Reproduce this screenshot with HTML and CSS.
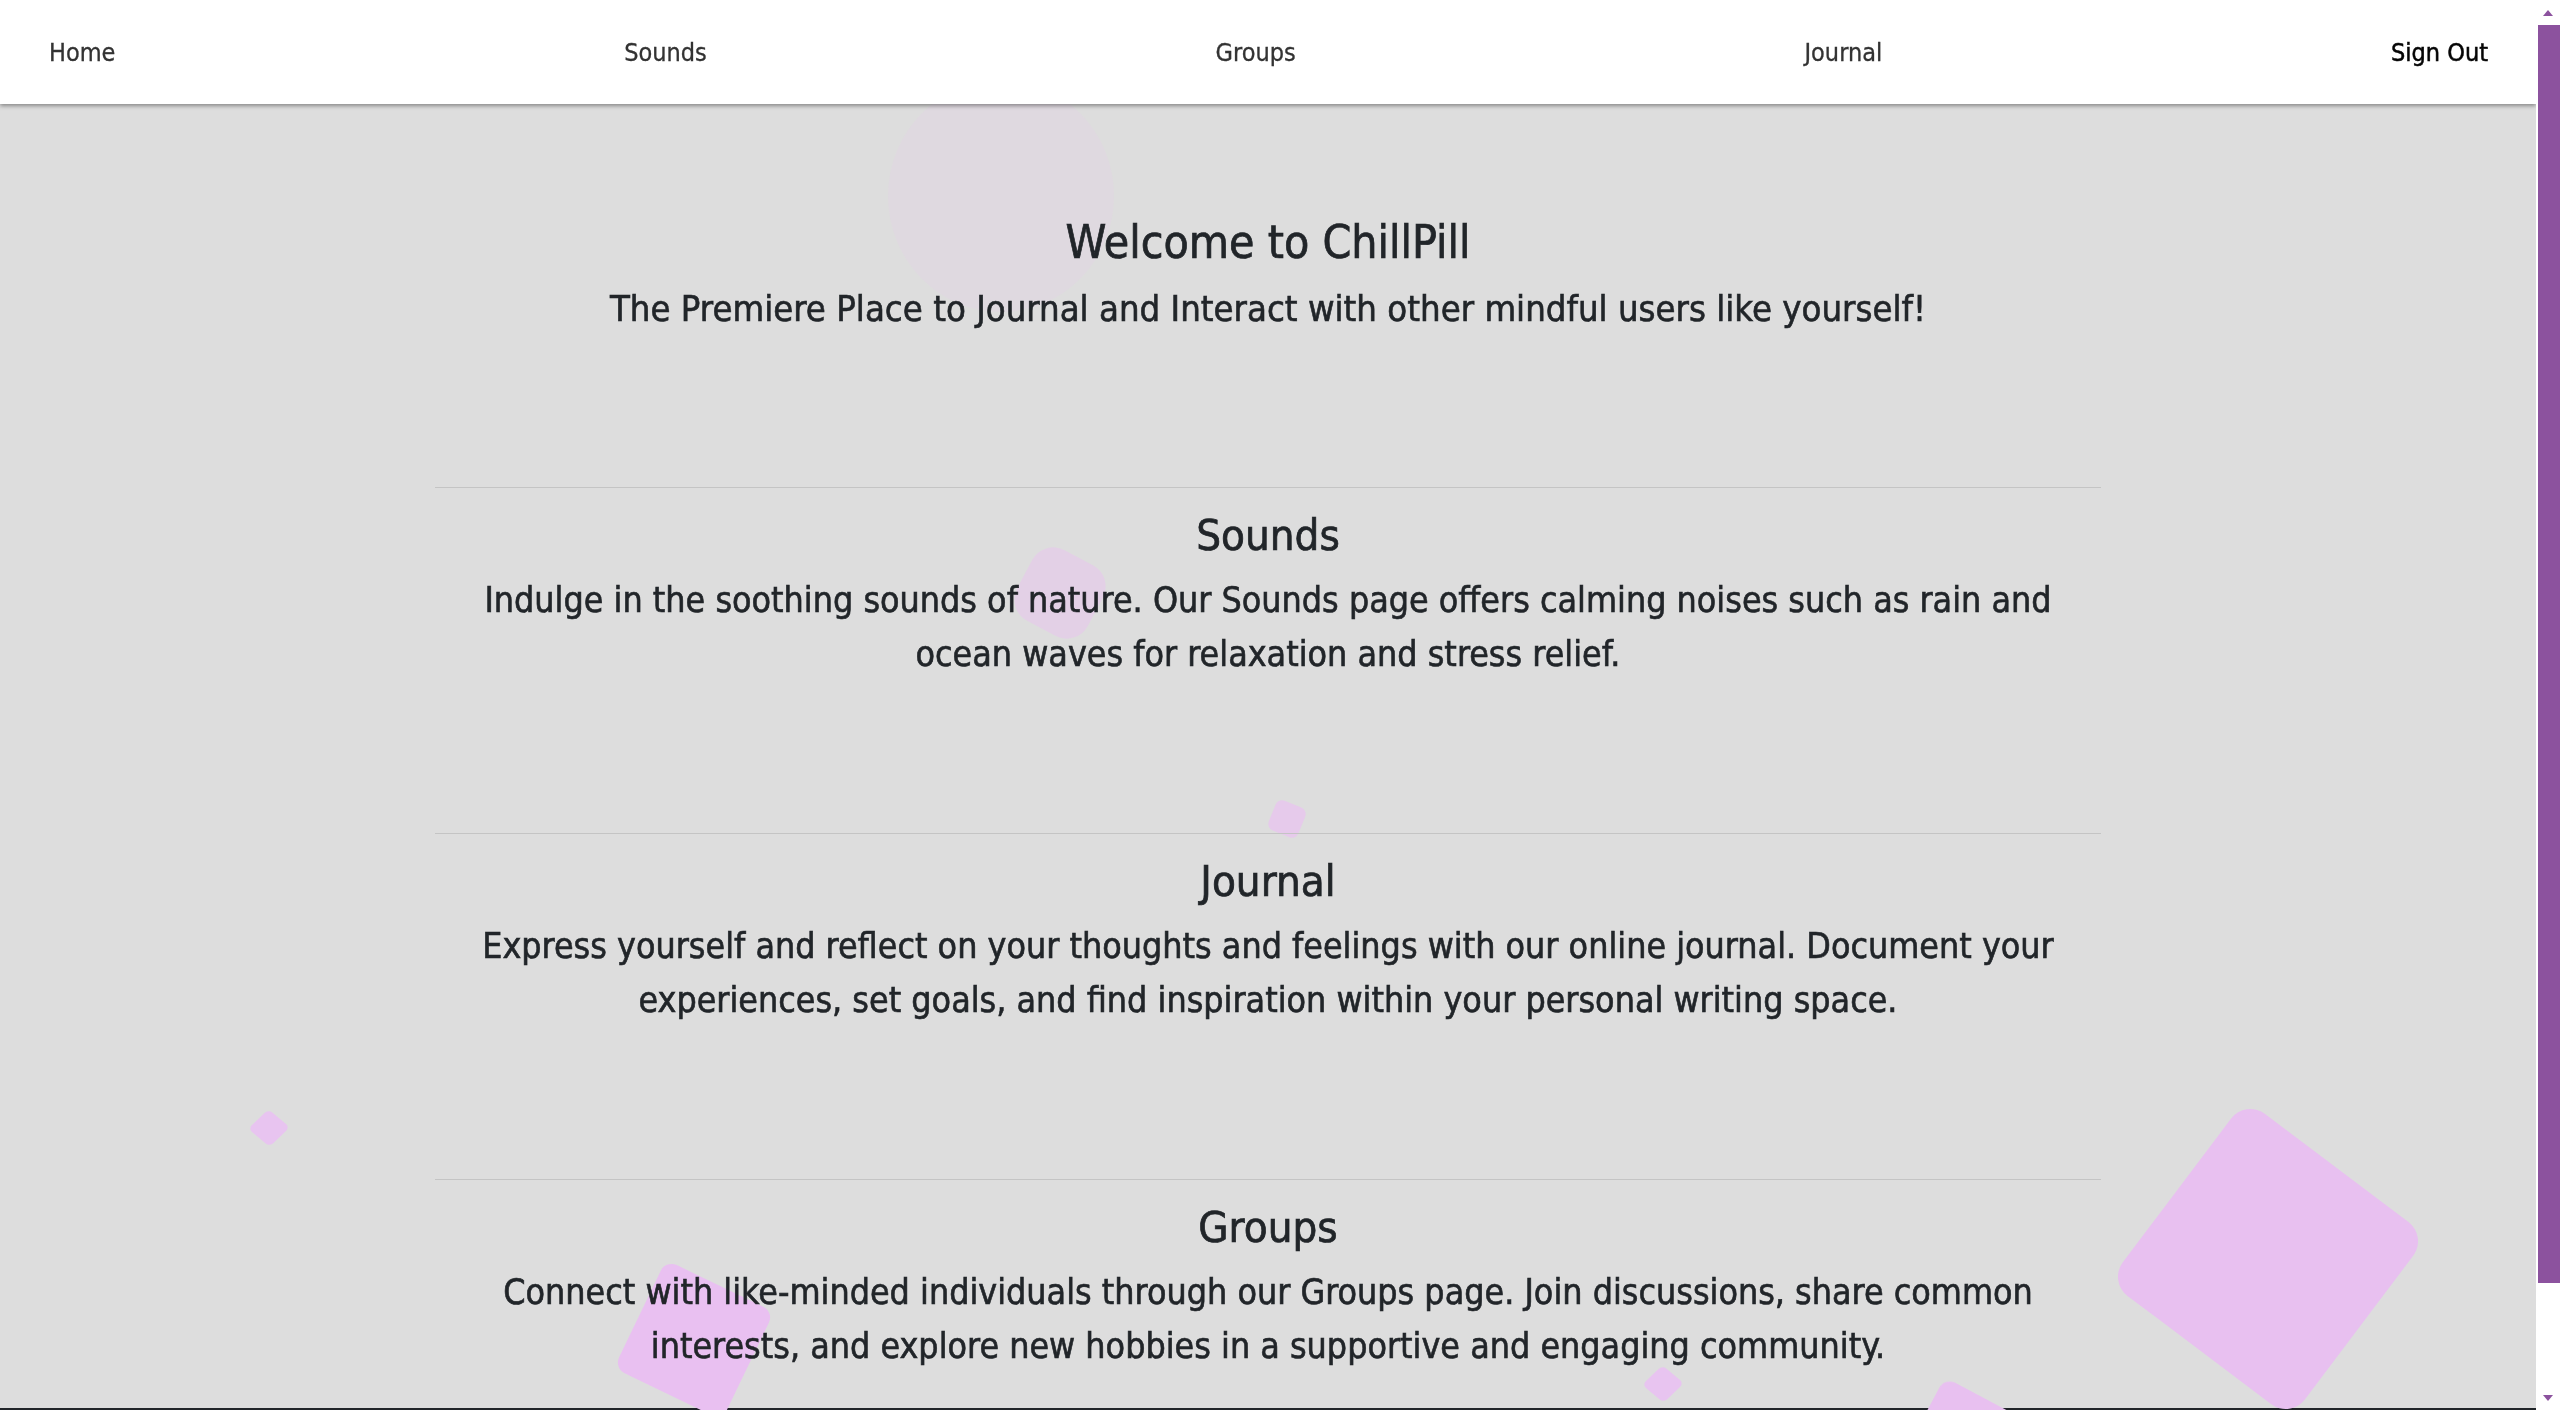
FILE: index.html
```html
<!DOCTYPE html>
<html lang="en">
<head>
<meta charset="utf-8">
<title>ChillPill</title>
<link rel="stylesheet" href="styles.css">
</head>
<body>
<nav class="topnav">
  <a class="nav-link" href="#">Home</a>
  <a class="nav-link" href="#">Sounds</a>
  <a class="nav-link" href="#">Groups</a>
  <a class="nav-link" href="#">Journal</a>
  <a class="nav-link nav-signout" href="#">Sign Out</a>
</nav>

<div class="shapes" aria-hidden="true">
  <span class="shape shape-faint"></span>
  <span class="shape shape-blob"></span>
  <span class="shape shape-tiny-a"></span>
  <span class="shape shape-tiny-left"></span>
  <span class="shape shape-big-left"></span>
  <span class="shape shape-big-right"></span>
  <span class="shape shape-tiny-b"></span>
  <span class="shape shape-bottom"></span>
</div>

<main class="content">
  <header class="hero">
    <h1 class="hero-title">Welcome to ChillPill</h1>
    <p class="hero-sub">The Premiere Place to Journal and Interact with other mindful users like yourself!</p>
  </header>
  <hr class="divider">
  <section class="feature">
    <h2 class="feature-title">Sounds</h2>
    <p class="feature-text">Indulge in the soothing sounds of nature. Our Sounds page offers calming noises such as rain and ocean waves for relaxation and stress relief.</p>
  </section>
  <hr class="divider">
  <section class="feature">
    <h2 class="feature-title">Journal</h2>
    <p class="feature-text">Express yourself and reflect on your thoughts and feelings with our online journal. Document your experiences, set goals, and find inspiration within your personal writing space.</p>
  </section>
  <hr class="divider">
  <section class="feature feature-last">
    <h2 class="feature-title">Groups</h2>
    <p class="feature-text">Connect with like-minded individuals through our Groups page. Join discussions, share common interests, and explore new hobbies in a supportive and engaging community.</p>
  </section>
</main>

<footer class="footer"></footer>

<div class="scrollbar" aria-hidden="true">
  <span class="sb-button"><span class="sb-arrow-up"></span></span>
  <span class="sb-track"><span class="sb-thumb"></span></span>
  <span class="sb-button"><span class="sb-arrow-down"></span></span>
</div>
</body>
</html>
```

FILE: styles.css
```css
* {
  box-sizing: border-box;
}

body {
  margin: 0 24px 0 0;
  background: #dddddd;
  color: #212529;
  font-family: "DejaVu Sans Condensed", "DejaVu Sans", sans-serif;
}

/* ---------- navigation ---------- */
.topnav {
  position: relative;
  z-index: 3;
  height: 104px;
  padding: 0 48px 0 49px;
  display: flex;
  align-items: center;
  justify-content: space-between;
  background: #ffffff;
  box-shadow: 0 2px 4px rgba(0, 0, 0, 0.38);
}

.nav-link {
  font-size: 25px;
  color: #333333;
  text-decoration: none;
  -webkit-text-stroke: 0.3px currentColor;
}

.nav-signout {
  color: #050505;
  -webkit-text-stroke: 0.5px currentColor;
}

/* ---------- decorative floating shapes ---------- */
.shapes {
  position: fixed;
  inset: 0;
  z-index: 1;
  pointer-events: none;
}

.shape {
  position: absolute;
  display: block;
}

.shape-faint {
  left: 888px;
  top: 80px;
  width: 226px;
  height: 232px;
  border-radius: 50%;
  background: #dfd9e0;
}

.shape-blob {
  left: 1020px;
  top: 553px;
  width: 80px;
  height: 80px;
  border-radius: 24px;
  background: #e3d0e6;
  transform: rotate(28deg);
}

.shape-tiny-a {
  left: 1271px;
  top: 803px;
  width: 32px;
  height: 32px;
  border-radius: 7px;
  background: #e6caeb;
  transform: rotate(22deg);
}

.shape-tiny-left {
  left: 255px;
  top: 1114px;
  width: 28px;
  height: 28px;
  border-radius: 5px;
  background: #e8c4f0;
  transform: rotate(40deg) skew(-6deg);
}

.shape-tiny-b {
  left: 1649px;
  top: 1370px;
  width: 28px;
  height: 28px;
  border-radius: 5px;
  background: #e8c4f0;
  transform: rotate(40deg) skew(-6deg);
}

.shape-big-left {
  left: 634px;
  top: 1280px;
  width: 120px;
  height: 120px;
  border-radius: 12px;
  background: #e9c0f1;
  transform: rotate(25.7deg);
}

.shape-big-right {
  left: 2154px;
  top: 1145px;
  width: 228px;
  height: 228px;
  border-radius: 24px;
  background: #e8c0f0;
  transform: rotate(37deg);
}

.shape-bottom {
  left: 1912px;
  top: 1397px;
  width: 112px;
  height: 112px;
  border-radius: 12px;
  background: #e8c0f0;
  transform: rotate(28deg);
}

/* ---------- main content ---------- */
.content {
  position: relative;
  z-index: 2;
  width: 1666px;
  margin: 0 auto;
  text-align: center;
}

.hero {
  padding: 107px 0 39px;
}

.hero-title {
  margin: 0;
  font-size: 46px;
  line-height: 62px;
  font-weight: normal;
  -webkit-text-stroke: 0.7px currentColor;
}

.hero-sub {
  margin: 9px 0 0;
  font-size: 36.2px;
  line-height: 54px;
  -webkit-text-stroke: 0.6px currentColor;
}

.divider {
  margin: 112px 0 0;
  border: 0;
  border-top: 1px solid #c4c4c4;
}

.feature {
  padding: 21px 0 40px;
}

.feature-last {
  padding-bottom: 35px;
}

.feature-title {
  margin: 0;
  font-size: 43.5px;
  line-height: 52px;
  font-weight: normal;
  -webkit-text-stroke: 0.7px currentColor;
}

.feature-text {
  max-width: 1620px;
  margin: 12px auto 0;
  font-size: 35.5px;
  line-height: 54px;
  -webkit-text-stroke: 0.6px currentColor;
}

.footer {
  height: 117px;
  background: #212529;
}

/* ---------- window scrollbar ---------- */
.scrollbar {
  position: fixed;
  top: 0;
  right: 0;
  z-index: 5;
  width: 24px;
  height: 100vh;
  display: flex;
  flex-direction: column;
  background: #ffffff;
}

.sb-button {
  flex: 0 0 25px;
  display: flex;
  align-items: center;
  justify-content: center;
}

.sb-arrow-up {
  width: 0;
  height: 0;
  border-left: 5px solid transparent;
  border-right: 5px solid transparent;
  border-bottom: 6px solid #8c529e;
}

.sb-arrow-down {
  width: 0;
  height: 0;
  border-left: 5px solid transparent;
  border-right: 5px solid transparent;
  border-top: 6px solid #8c529e;
}

.sb-track {
  flex: 1;
  display: flex;
  flex-direction: column;
  align-items: flex-end;
}

.sb-thumb {
  width: 22px;
  height: 1258px;
  background: #8c529e;
}
```
